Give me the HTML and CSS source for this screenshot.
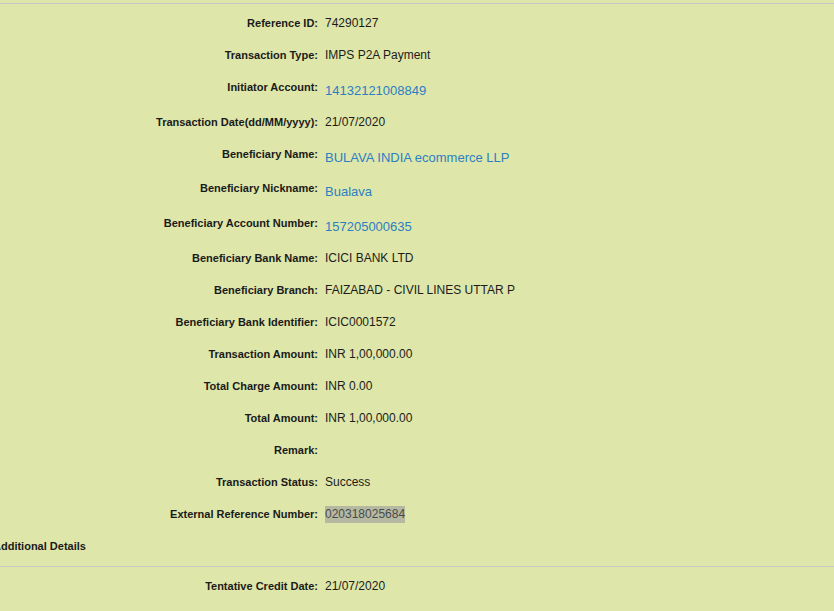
FILE: index.html
```html
<!DOCTYPE html>
<html>
<head>
<meta charset="utf-8">
<link rel="stylesheet" href="styles.css">
</head>
<body>
<div class="page">
  <div class="details">
    <div class="row"><div class="label">Reference ID:</div><div class="value">74290127</div></div>
    <div class="row"><div class="label">Transaction Type:</div><div class="value">IMPS P2A Payment</div></div>
    <div class="row"><div class="label">Initiator Account:</div><div class="value link">14132121008849</div></div>
    <div class="row"><div class="label">Transaction Date(dd/MM/yyyy):</div><div class="value">21/07/2020</div></div>
    <div class="row"><div class="label">Beneficiary Name:</div><div class="value link compact">BULAVA INDIA ecommerce LLP</div></div>
    <div class="row"><div class="label">Beneficiary Nickname:</div><div class="value link">Bualava</div></div>
    <div class="row"><div class="label">Beneficiary Account Number:</div><div class="value link">157205000635</div></div>
    <div class="row"><div class="label">Beneficiary Bank Name:</div><div class="value">ICICI BANK LTD</div></div>
    <div class="row"><div class="label">Beneficiary Branch:</div><div class="value">FAIZABAD - CIVIL LINES UTTAR P</div></div>
    <div class="row"><div class="label">Beneficiary Bank Identifier:</div><div class="value">ICIC0001572</div></div>
    <div class="row"><div class="label">Transaction Amount:</div><div class="value">INR 1,00,000.00</div></div>
    <div class="row"><div class="label">Total Charge Amount:</div><div class="value">INR 0.00</div></div>
    <div class="row"><div class="label">Total Amount:</div><div class="value">INR 1,00,000.00</div></div>
    <div class="row"><div class="label">Remark:</div><div class="value"></div></div>
    <div class="row"><div class="label">Transaction Status:</div><div class="value">Success</div></div>
    <div class="row"><div class="label">External Reference Number:</div><div class="value"><span class="selected">020318025684</span></div></div>
  </div>
  <div class="section-title">Additional Details</div>
  <div class="details extra">
    <div class="row"><div class="label">Tentative Credit Date:</div><div class="value">21/07/2020</div></div>
  </div>
</div>
</body>
</html>
```
FILE: styles.css
```css
html, body {
  margin: 0;
  padding: 0;
  background: #dee6a9;
  height: 100%;
  overflow: hidden;
}
body {
  font-family: "Liberation Sans", Arial, sans-serif;
  color: #1c1c1c;
}
.page {
  margin-top: 3px;
  border-top: 1px solid #c4c6c8;
}
.details {
  padding-top: 3px;
}
.row {
  display: flex;
  align-items: flex-start;
  padding: 9px 0;
}
.label {
  width: 318px;
  flex: none;
  text-align: right;
  font-size: 11px;
  font-weight: bold;
  line-height: 14px;
  color: #1a1a1a;
}
.value {
  margin-left: 7px;
  font-size: 12px;
  line-height: 14px;
  min-height: 14px;
  color: #1c1c1c;
}
.value.link {
  font-size: 13px;
  line-height: 15px;
  margin-top: 3px;
  margin-bottom: -1px;
  color: #2b7fc3;
}
.value.link.compact {
  margin-bottom: -2px;
}
.selected {
  background: #b6b9a2;
  color: #4a4a4a;
  padding: 1px 0 2px;
}
.section-title {
  margin-left: -7px;
  padding: 9px 0 13px;
  border-bottom: 1px solid #c8c9c3;
  font-size: 11px;
  font-weight: bold;
  line-height: 14px;
  color: #1a1a1a;
}
.extra {
  padding-top: 3px;
}
```
